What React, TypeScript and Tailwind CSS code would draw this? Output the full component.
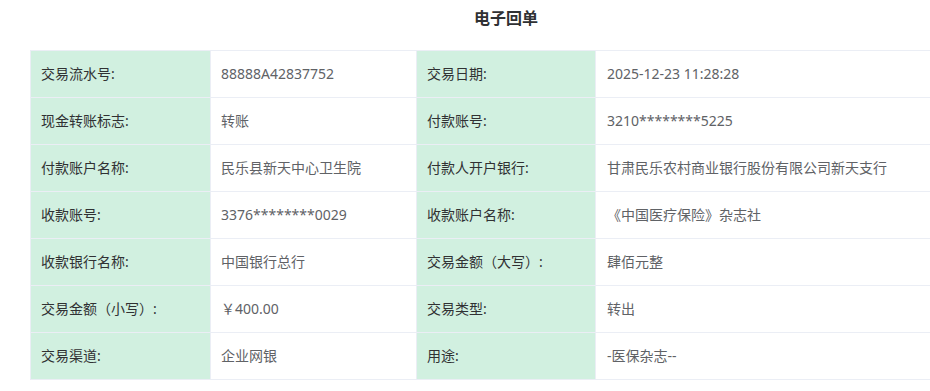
import React from 'react';

const rows: [string, string, string, string][] = [
  ['交易流水号:', '88888A42837752', '交易日期:', '2025-12-23 11:28:28'],
  ['现金转账标志:', '转账', '付款账号:', '3210********5225'],
  ['付款账户名称:', '民乐县新天中心卫生院', '付款人开户银行:', '甘肃民乐农村商业银行股份有限公司新天支行'],
  ['收款账号:', '3376********0029', '收款账户名称:', '《中国医疗保险》杂志社'],
  ['收款银行名称:', '中国银行总行', '交易金额（大写）:', '肆佰元整'],
  ['交易金额（小写）:', '￥400.00', '交易类型:', '转出'],
  ['交易渠道:', '企业网银', '用途:', '-医保杂志--'],
];

export default function App() {
  return (
    <div className="w-[930px] h-[391px] overflow-hidden bg-white font-['Noto_Sans','Noto_Sans_CJK_SC',sans-serif]">
      <div className="w-[952px] ml-[30px]">
        <h2 className="h-[50px] pt-[6px] text-center text-base font-bold text-[#303133]">电子回单</h2>
        <table className="w-full border-collapse table-fixed text-sm">
          <colgroup>
            <col className="w-[180px]" />
            <col className="w-[206px]" />
            <col className="w-[179px]" />
            <col />
          </colgroup>
          <tbody>
            {rows.map((r, i) => (
              <tr key={i} className="h-[47px]">
                <td className="border border-[#ebeef5] bg-[#d1f0e0] pl-[10px] text-[#303133]">{r[0]}</td>
                <td className="border border-[#ebeef5] pl-[10px] text-[#606266]">{r[1]}</td>
                <td className="border border-[#ebeef5] bg-[#d1f0e0] pl-[10px] text-[#303133]">{r[2]}</td>
                <td className="border border-[#ebeef5] pl-[11px] text-[#606266]">{r[3]}</td>
              </tr>
            ))}
          </tbody>
        </table>
      </div>
    </div>
  );
}
